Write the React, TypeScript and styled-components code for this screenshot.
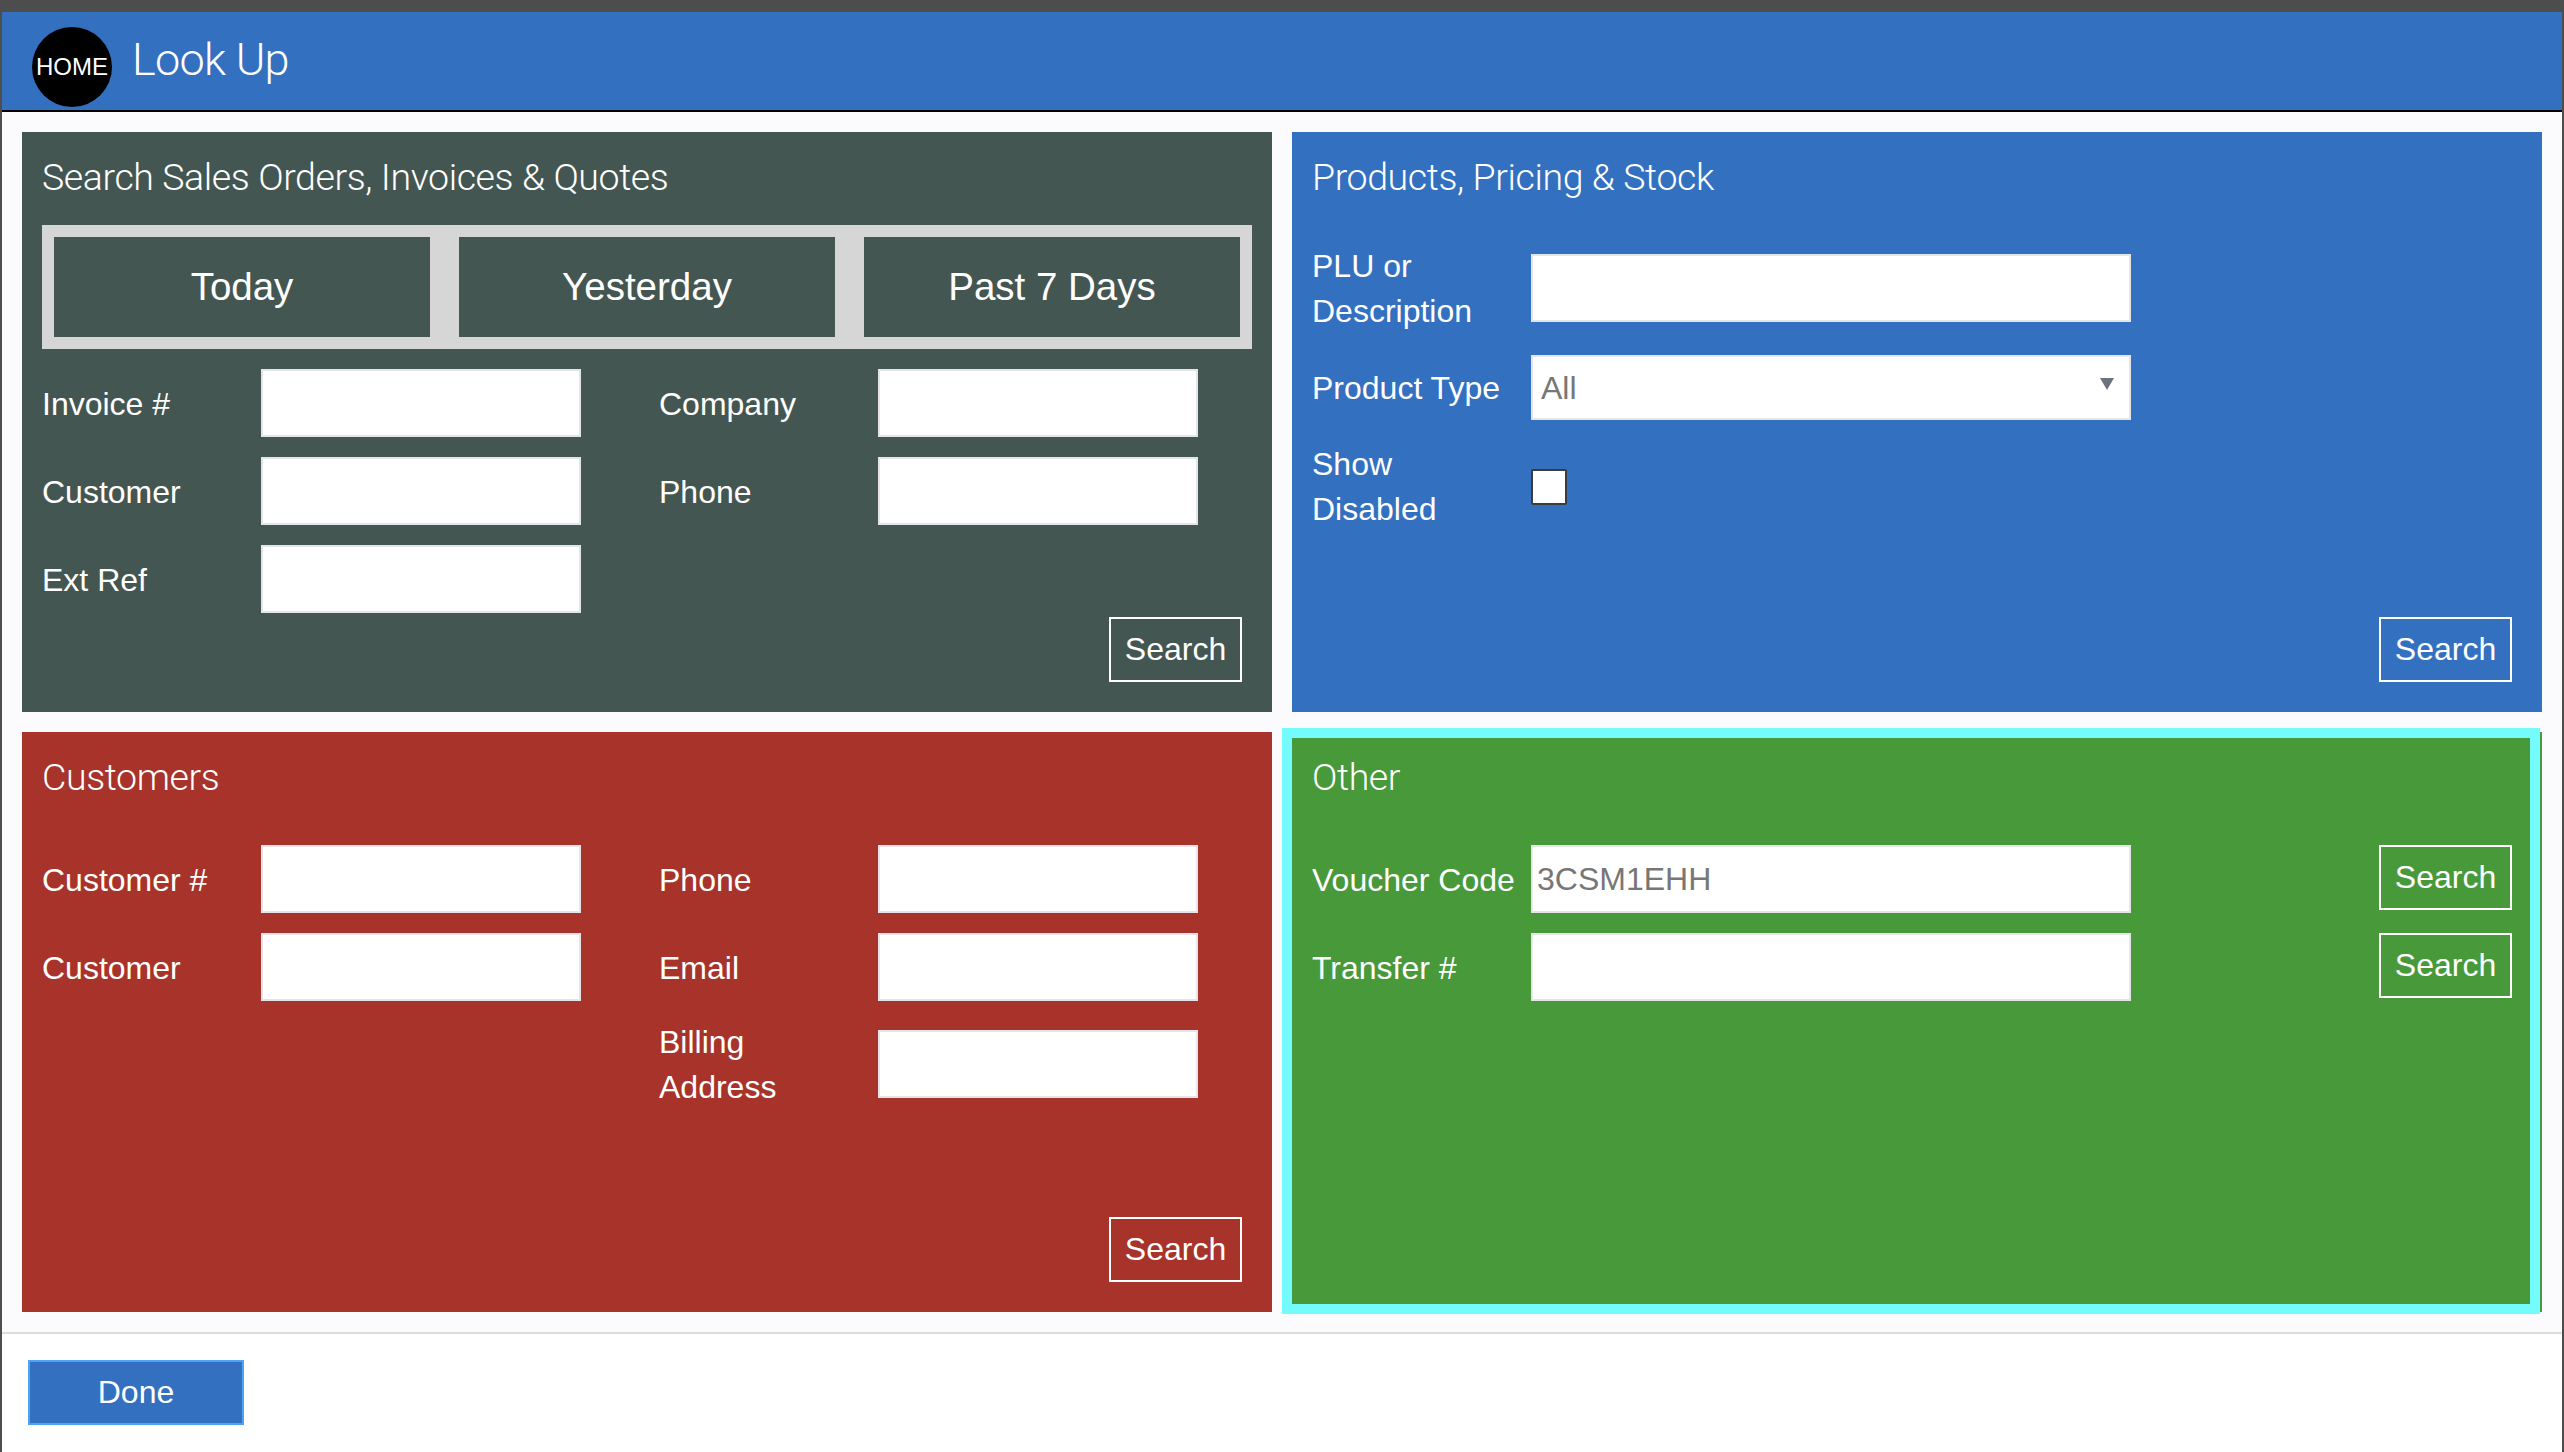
import React from "react";
import styled, { createGlobalStyle } from "styled-components";

const Global = createGlobalStyle`
  html, body { margin: 0; padding: 0; background: #4d4d4d; }
  * { box-sizing: border-box; }
  #root { width: 2564px; height: 1452px; overflow: hidden; }
`;

const sans = `"Liberation Sans", Arial, sans-serif`;
const light = `Roboto, "Noto Sans", "Open Sans", sans-serif`;

const Page = styled.div`
  width: 2564px;
  height: 1452px;
  padding: 12px 2px 0;
  display: flex;
  flex-direction: column;
  font-family: ${sans};
  color: #fff;
`;

const Header = styled.header`
  height: 100px;
  flex: none;
  background: #3370c0;
  border-bottom: 2px solid #000;
  display: flex;
  align-items: center;
  padding: 0 0 0 30px;
  gap: 20px;
`;

const HomeButton = styled.button`
  width: 80px;
  height: 80px;
  border-radius: 50%;
  background: #000;
  border: 0;
  padding: 0;
  margin-top: 12px;
  color: #fff;
  font: 24px ${sans};
  display: flex;
  align-items: center;
  justify-content: center;
`;

const PageTitle = styled.h1`
  margin: 0 0 2px;
  font: 300 45px/56px ${light};
  letter-spacing: -0.7px;
`;

const Content = styled.main`
  height: 1222px;
  flex: none;
  background: #fbfbfd;
  padding: 20px;
  display: grid;
  grid-template-columns: 1250px 1250px;
  grid-template-rows: 580px 580px;
  gap: 20px;
  border-bottom: 2px solid #dcdcdc;
`;

const Panel = styled.section<{ $bg: string }>`
  position: relative;
  background: ${(p) => p.$bg};
  padding: 0 20px 30px;
  display: flex;
  flex-direction: column;
`;

const FocusRing = styled.div`
  position: absolute;
  top: -4px;
  left: -10px;
  right: 2px;
  bottom: -2px;
  border: 10px solid #74fbfd;
  pointer-events: none;
`;

const PanelTitle = styled.h2<{ $gap: number }>`
  margin: 0 0 ${(p) => p.$gap}px;
  height: 90px;
  font: 300 37.5px/90px ${light};
  letter-spacing: -0.4px;
`;

const Tabs = styled.div`
  display: grid;
  grid-template-columns: repeat(3, 376px);
  gap: 29px;
  padding: 12px;
  background: #d6d6d6;
  margin-bottom: 20px;
`;

const Tab = styled.button`
  height: 100px;
  background: #445651;
  border: 0;
  color: #fff;
  font: 38.5px ${sans};
`;

const Columns = styled.div`
  display: flex;
`;

const Column = styled.div`
  width: 617px;
  flex: none;
  display: flex;
  flex-direction: column;
  gap: 20px;
`;

const Row = styled.div<{ $pull?: number; $min?: number }>`
  display: flex;
  align-items: center;
  min-height: ${(p) => p.$min ?? 68}px;
  margin-top: ${(p) => -(p.$pull ?? 0)}px;
`;

const Label = styled.label`
  width: 219px;
  flex: none;
  font-size: 32px;
  line-height: 45px;
  padding-right: 10px;
  transform: translateY(1px);
`;

const TextInput = styled.input<{ $w?: number }>`
  width: ${(p) => p.$w ?? 320}px;
  height: 68px;
  background: #fff;
  border: 2px solid #e4e4ea;
  border-radius: 0;
  padding: 0 4px;
  color: #777;
  font: 32px ${sans};
  outline: none;
`;

const Stack = styled.div<{ $gap: number }>`
  display: flex;
  flex-direction: column;
  gap: ${(p) => p.$gap}px;
`;

const SelectWrap = styled.div`
  position: relative;
  width: 600px;
  height: 65px;
  &::after {
    content: "";
    position: absolute;
    right: 17px;
    top: 23px;
    border-left: 7px solid transparent;
    border-right: 7px solid transparent;
    border-top: 12px solid #6d7280;
  }
`;

const Select = styled.select`
  appearance: none;
  width: 100%;
  height: 100%;
  background: #fff;
  border: 2px solid #e4e4ea;
  border-radius: 0;
  padding: 0 8px;
  color: #777;
  font: 32px ${sans};
  outline: none;
`;

const Checkbox = styled.input`
  appearance: none;
  width: 36px;
  height: 36px;
  margin: 2px 0 0;
  background: #fff;
  border: 2px solid #3c3c3c;
  border-radius: 2px;
`;

const SearchButton = styled.button<{ $side?: boolean }>`
  width: 133px;
  height: 65px;
  background: transparent;
  border: 2px solid #fff;
  color: #fff;
  font: 32px ${sans};
  padding: 0;
  flex: none;
  margin: ${(p) => (p.$side ? "0 10px 0 auto" : "auto 10px 0 auto")};
`;

const SideRow = styled(Row)`
  align-items: flex-start;
  label { line-height: 68px; }
`;

const Footer = styled.footer`
  flex: 1;
  background: #fff;
  padding: 26px;
`;

const DoneButton = styled.button`
  width: 216px;
  height: 65px;
  background: #3370c0;
  border: 2px solid #4da3f5;
  color: #fff;
  font: 32px ${sans};
`;

const Field = ({ label, pull }: { label: React.ReactNode; pull?: number }) => (
  <Row $pull={pull}>
    <Label>{label}</Label>
    <TextInput />
  </Row>
);

export default function App() {
  return (
    <Page>
      <Global />
      <Header>
        <HomeButton>HOME</HomeButton>
        <PageTitle>Look Up</PageTitle>
      </Header>
      <Content>
        <Panel $bg="#445651">
          <PanelTitle $gap={3}>Search Sales Orders, Invoices &amp; Quotes</PanelTitle>
          <Tabs>
            <Tab>Today</Tab>
            <Tab>Yesterday</Tab>
            <Tab>Past 7 Days</Tab>
          </Tabs>
          <Columns>
            <Column>
              <Field label="Invoice #" />
              <Field label="Customer" />
              <Field label="Ext Ref" />
            </Column>
            <Column>
              <Field label="Company" />
              <Field label="Phone" />
            </Column>
          </Columns>
          <SearchButton>Search</SearchButton>
        </Panel>

        <Panel $bg="#3370c0">
          <PanelTitle $gap={21}>Products, Pricing &amp; Stock</PanelTitle>
          <Stack $gap={22}>
            <Row>
              <Label>PLU or<br />Description</Label>
              <TextInput $w={600} />
            </Row>
            <Row $min={65}>
              <Label>Product Type</Label>
              <SelectWrap>
                <Select defaultValue="All">
                  <option>All</option>
                </Select>
              </SelectWrap>
            </Row>
            <Row $pull={1}>
              <Label>Show<br />Disabled</Label>
              <Checkbox type="checkbox" />
            </Row>
          </Stack>
          <SearchButton>Search</SearchButton>
        </Panel>

        <Panel $bg="#a7332a">
          <PanelTitle $gap={23}>Customers</PanelTitle>
          <Columns>
            <Column>
              <Field label="Customer #" />
              <Field label="Customer" />
            </Column>
            <Column>
              <Field label="Phone" />
              <Field label="Email" />
              <Field label={<>Billing<br />Address</>} pull={2} />
            </Column>
          </Columns>
          <SearchButton>Search</SearchButton>
        </Panel>

        <Panel $bg="#48993a">
          <FocusRing />
          <PanelTitle $gap={23}>Other</PanelTitle>
          <Stack $gap={20}>
            <SideRow>
              <Label>Voucher Code</Label>
              <TextInput $w={600} defaultValue="3CSM1EHH" />
              <SearchButton $side>Search</SearchButton>
            </SideRow>
            <SideRow>
              <Label>Transfer #</Label>
              <TextInput $w={600} />
              <SearchButton $side>Search</SearchButton>
            </SideRow>
          </Stack>
        </Panel>
      </Content>
      <Footer>
        <DoneButton>Done</DoneButton>
      </Footer>
    </Page>
  );
}
